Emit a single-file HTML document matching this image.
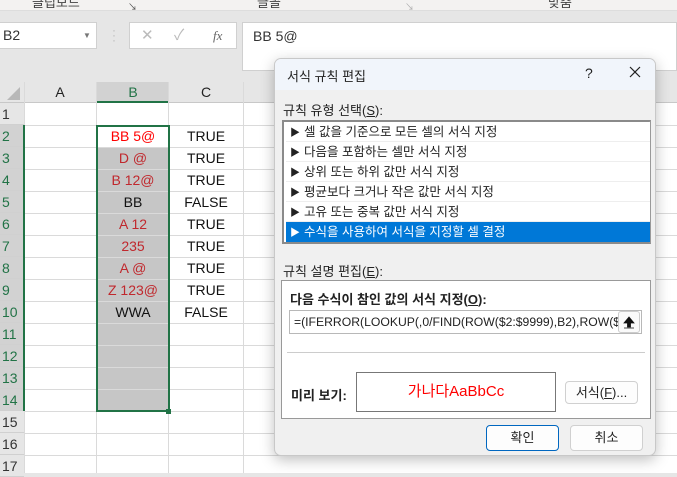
<!DOCTYPE html>
<html><head><meta charset="utf-8"><style>
*{margin:0;padding:0;box-sizing:border-box}
body{width:677px;height:473px;overflow:hidden;background:#e6e6e6;position:relative;font-family:"Liberation Sans","Noto Sans CJK KR",sans-serif;font-size:14px;color:#222}
.a{position:absolute}
.rib{left:0;top:0;width:677px;height:11px;background:#f3f2f1;border-bottom:1px solid #ddd;overflow:hidden}
.rib span{position:absolute;top:-8px;font-size:13px;color:#444}
.grid{left:0;top:82px;width:677px;height:391px;background:#fff}
.hl{position:absolute;left:0;width:677px;height:1px;background:#dadada}
.vl{position:absolute;top:0;width:1px;height:391px;background:#dadada}
.rh{position:absolute;left:0;width:24px;height:22px;font-size:14px;color:#333;padding-left:2px;line-height:22px;background:#e6e6e6;border-bottom:1px solid #d0d0d0}
.cell{position:absolute;width:72px;text-align:center;line-height:22px;height:22px;font-size:14px}
.cc{position:absolute;left:169px;width:74px;text-align:center;line-height:22px;font-size:14px;color:#111}
.dlg{left:274px;top:58px;width:382px;height:398px;background:#f0f0f0;border:1px solid #c8c8c8;border-radius:7px;box-shadow:0 4px 14px rgba(0,0,0,.25);overflow:hidden}
.li{position:absolute;left:2px;width:364px;height:20px;line-height:20px;padding-left:4px;font-size:12.5px;border-bottom:1px solid #eee;background:#fff}
.li i{font-style:normal;font-size:10px;margin-right:4px}
.btn{position:absolute;background:#fdfdfd;border:1px solid #d0d0d0;border-radius:4px;text-align:center;font-size:13px}
</style></head><body>
<div class="a rib"><span style="left:32px">클립보드</span><span style="left:128px;font-size:9px;top:0">↘</span><span style="left:257px">글꼴</span><span style="left:405px;font-size:9px;top:0;color:#aaa">↘</span><span style="left:548px">맞춤</span></div>
<div class="a" style="left:0;top:22px;width:97px;height:27px;background:#fff;border:1px solid #d0d0d0;border-left:none;font-size:14px;line-height:25px;padding-left:3px;color:#333">B2<span style="position:absolute;left:83px;top:0;font-size:8px;color:#777">▼</span></div>
<div class="a" style="left:112px;top:28px;color:#bbb;font-size:12px;line-height:5px">·<br>·<br>·</div>
<div class="a" style="left:129px;top:22px;width:108px;height:27px;background:#fff;border:1px solid #d0d0d0;color:#bbb;font-size:15px;line-height:25px"><span style="position:absolute;left:11px">✕</span><span style="position:absolute;left:44px">✓</span><span style="position:absolute;left:83px;font-family:'Liberation Serif';font-style:italic;color:#666;font-size:13px">fx</span></div>
<div class="a" style="left:242px;top:22px;width:435px;height:49px;background:#fff;border:1px solid #d0d0d0;padding:5px 10px;font-size:14px;color:#333">BB 5@</div>
<div class="a grid">
 <div class="a" style="left:0;top:0;width:677px;height:21px;background:#e6e6e6;border-bottom:1px solid #c8c8c8"></div>
 <div class="a" style="left:97px;top:0;width:72px;height:21px;background:#d2d2d2;border-bottom:2px solid #217346"></div>
 <div class="a" style="left:7px;top:5px;width:0;height:0;border-left:13px solid transparent;border-bottom:13px solid #b8b8b8"></div>
 <div class="a" style="left:24px;width:72px;text-align:center;line-height:21px;top:0">A</div>
 <div class="a" style="left:97px;width:72px;text-align:center;line-height:21px;top:0;color:#217346">B</div>
 <div class="a" style="left:169px;width:74px;text-align:center;line-height:21px;top:0">C</div>
 <div class="a" style="left:97px;top:43px;width:72px;height:286px;background:#c6c6c6"></div>
 <div class="a" style="left:97px;top:21px;width:72px;height:22px;background:#fff"></div>
 <div class="a" style="left:97px;top:43px;width:72px;height:22px;background:#fff"></div>
 <div class="vl" style="left:24px"></div><div class="vl" style="left:96px"></div><div class="vl" style="left:168px"></div><div class="vl" style="left:243px"></div>
 <div class="hl" style="top:43px"></div><div class="hl" style="top:65px"></div><div class="hl" style="top:87px"></div><div class="hl" style="top:109px"></div><div class="hl" style="top:131px"></div><div class="hl" style="top:153px"></div><div class="hl" style="top:175px"></div><div class="hl" style="top:197px"></div><div class="hl" style="top:219px"></div><div class="hl" style="top:241px"></div><div class="hl" style="top:263px"></div><div class="hl" style="top:285px"></div><div class="hl" style="top:307px"></div><div class="hl" style="top:329px"></div><div class="hl" style="top:351px"></div><div class="hl" style="top:373px"></div>
 <div class="rh" style="top:21px;background:#e6e6e6">1</div>
 <div class="rh" style="top:43px;background:#d2d2d2;color:#217346">2</div><div class="rh" style="top:65px;background:#d2d2d2;color:#217346">3</div><div class="rh" style="top:87px;background:#d2d2d2;color:#217346">4</div><div class="rh" style="top:109px;background:#d2d2d2;color:#217346">5</div><div class="rh" style="top:131px;background:#d2d2d2;color:#217346">6</div><div class="rh" style="top:153px;background:#d2d2d2;color:#217346">7</div><div class="rh" style="top:175px;background:#d2d2d2;color:#217346">8</div><div class="rh" style="top:197px;background:#d2d2d2;color:#217346">9</div><div class="rh" style="top:219px;background:#d2d2d2;color:#217346">10</div><div class="rh" style="top:241px;background:#d2d2d2;color:#217346">11</div><div class="rh" style="top:263px;background:#d2d2d2;color:#217346">12</div><div class="rh" style="top:285px;background:#d2d2d2;color:#217346">13</div><div class="rh" style="top:307px;background:#d2d2d2;color:#217346">14</div>
 <div class="rh" style="top:329px">15</div><div class="rh" style="top:351px">16</div><div class="rh" style="top:373px">17</div>
 <div class="a" style="left:23px;top:43px;width:2px;height:286px;background:#217346"></div>
 <div class="a" style="left:96px;top:43px;width:74px;height:287px;border:2px solid #217346"></div>
 <div class="a" style="left:166px;top:327px;width:5px;height:5px;background:#217346"></div>
 <div class="cell" style="left:97px;top:43px;color:#f00">BB 5@</div>
 <div class="cell" style="left:97px;top:65px;color:#c0282d">D @</div>
 <div class="cell" style="left:97px;top:87px;color:#c0282d">B 12@</div>
 <div class="cell" style="left:97px;top:109px;color:#111">BB</div>
 <div class="cell" style="left:97px;top:131px;color:#c0282d">A 12</div>
 <div class="cell" style="left:97px;top:153px;color:#c0282d">235</div>
 <div class="cell" style="left:97px;top:175px;color:#c0282d">A @</div>
 <div class="cell" style="left:97px;top:197px;color:#c0282d">Z 123@</div>
 <div class="cell" style="left:97px;top:219px;color:#111">WWA</div>
 <div class="cc" style="top:43px">TRUE</div><div class="cc" style="top:65px">TRUE</div><div class="cc" style="top:87px">TRUE</div><div class="cc" style="top:109px">FALSE</div><div class="cc" style="top:131px">TRUE</div><div class="cc" style="top:153px">TRUE</div><div class="cc" style="top:175px">TRUE</div><div class="cc" style="top:197px">TRUE</div><div class="cc" style="top:219px">FALSE</div>
</div>
<div class="a dlg">
 <div class="a" style="left:0;top:0;width:382px;height:31px;background:#f1f5fb"></div>
 <div class="a" style="left:12px;top:7px;font-size:13px">서식 규칙 편집</div>
 <div class="a" style="left:310px;top:6px;font-size:14px">?</div>
 <div class="a" style="left:352px;top:5px;width:16px;height:16px"><svg width="16" height="16"><path d="M3 3L13 13M13 3L3 13" stroke="#222" stroke-width="1.2"/></svg></div>
 <div class="a" style="left:8px;top:41px;font-size:13px">규칙 유형 선택(<u>S</u>):</div>
 <div class="a" style="left:7px;top:61px;width:369px;height:124px;background:#fff;border:2px solid #8a8a8a;border-right-color:#999">
  <div class="li" style="top:0"><i>▶</i>셀 값을 기준으로 모든 셀의 서식 지정</div>
  <div class="li" style="top:20px"><i>▶</i>다음을 포함하는 셀만 서식 지정</div>
  <div class="li" style="top:40px"><i>▶</i>상위 또는 하위 값만 서식 지정</div>
  <div class="li" style="top:60px"><i>▶</i>평균보다 크거나 작은 값만 서식 지정</div>
  <div class="li" style="top:80px"><i>▶</i>고유 또는 중복 값만 서식 지정</div>
  <div class="li" style="top:100px;background:#0078d7;color:#fff;border:none"><i>▶</i>수식을 사용하여 서식을 지정할 셀 결정</div>
 </div>
 <div class="a" style="left:8px;top:202px;font-size:13px">규칙 설명 편집(<u>E</u>):</div>
 <div class="a" style="left:6px;top:221px;width:370px;height:139px;background:#fff;border:1px solid #999"></div>
 <div class="a" style="left:15px;top:230px;font-size:13px;font-weight:bold">다음 수식이 참인 값의 서식 지정(<u>O</u>):</div>
 <div class="a" style="left:14px;top:251px;width:353px;height:24px;background:#fff;border:1px solid #b8b8b8;font-size:12.2px;line-height:22px;padding-left:4px;overflow:hidden;white-space:nowrap">=(IFERROR(LOOKUP(,0/FIND(ROW($2:$9999),B2),ROW($2:$</div>
 <div class="a" style="left:343px;top:252px;width:22px;height:22px;background:#fafafa;border:1px solid #ccc;border-radius:3px"><svg width="20" height="20"><path d="M10 5L5 11H8.5V15H11.5V11H15Z M5 16H15" fill="#111" stroke="#111" stroke-width="0.8"/></svg></div>
 <div class="a" style="left:12px;top:293px;width:358px;height:1px;background:#ccc"></div>
 <div class="a" style="left:16px;top:326px;font-size:13px;font-weight:bold">미리 보기:</div>
 <div class="a" style="left:81px;top:313px;width:200px;height:40px;border:1px solid #777;background:#fff;text-align:center;line-height:38px;color:#f00;font-size:15px">가나다AaBbCc</div>
 <div class="btn" style="left:290px;top:322px;width:73px;height:23px;line-height:21px">서식(<u>F</u>)...</div>
 <div class="btn" style="left:211px;top:366px;width:73px;height:26px;line-height:24px;border:1px solid #0067c0">확인</div>
 <div class="btn" style="left:295px;top:366px;width:73px;height:26px;line-height:24px">취소</div>
</div>
</body></html>
